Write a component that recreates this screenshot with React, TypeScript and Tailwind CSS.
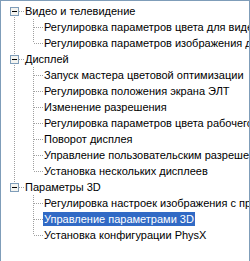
import React from "react";

type Node = { label: string; selected?: boolean; children?: Node[] };

const tree: Node[] = [
  {
    label: "Видео и телевидение",
    children: [
      { label: "Регулировка параметров цвета для видео" },
      { label: "Регулировка параметров изображения для видео" },
    ],
  },
  {
    label: "Дисплей",
    children: [
      { label: "Запуск мастера цветовой оптимизации" },
      { label: "Регулировка положения экрана ЭЛТ" },
      { label: "Изменение разрешения" },
      { label: "Регулировка параметров цвета рабочего стола" },
      { label: "Поворот дисплея" },
      { label: "Управление пользовательским разрешением" },
      { label: "Установка нескольких дисплеев" },
    ],
  },
  {
    label: "Параметры 3D",
    children: [
      { label: "Регулировка настроек изображения с просмотром" },
      { label: "Управление параметрами 3D", selected: true },
      { label: "Установка конфигурации PhysX" },
    ],
  },
];

// one 19x16 cell of the tree's dotted connectors
function Lines({ up, down, right, box }: { up?: boolean; down?: boolean; right?: boolean; box?: boolean }) {
  return (
    <svg width="19" height="16" className="shrink-0" shapeRendering="crispEdges">
      <g stroke="#a0a0a0" strokeWidth="1" strokeDasharray="1 1">
        {up && <line x1="9.5" y1="0" x2="9.5" y2="8" />}
        {down && <line x1="9.5" y1="8" x2="9.5" y2="16" />}
        {right && <line x1="10" y1="8.5" x2="19" y2="8.5" />}
      </g>
      {box && (
        <g>
          <rect x="5.5" y="4.5" width="8" height="8" fill="#f4f4f0" stroke="#7f9db9" />
          <line x1="7" y1="8.5" x2="12" y2="8.5" stroke="#000" />
        </g>
      )}
    </svg>
  );
}

function Label({ text, selected }: { text: string; selected?: boolean }) {
  return (
    <span
      className={
        "whitespace-nowrap px-px leading-[14px] " +
        (selected ? "bg-[#316ac5] text-white" : "text-black")
      }
    >
      {text}
    </span>
  );
}

export default function App() {
  return (
    <div className="w-[250px] h-[261px] bg-white border-l border-r border-t border-[#7f9db9] overflow-hidden pt-[2px] pl-[4px] text-[11px] font-['Liberation_Sans',Arial,sans-serif]">
      {tree.map((root, i) => {
        const lastRoot = i === tree.length - 1;
        return (
          <div key={root.label}>
            <div className="flex h-4 items-center">
              <Lines up={i > 0} down={!lastRoot} right box />
              <Label text={root.label} />
            </div>
            {root.children?.map((c, j) => (
              <div key={c.label} className="flex h-4 items-center">
                <Lines up={!lastRoot} down={!lastRoot} />
                <Lines up down={j < root.children!.length - 1} right />
                <Label text={c.label} selected={c.selected} />
              </div>
            ))}
          </div>
        );
      })}
    </div>
  );
}
